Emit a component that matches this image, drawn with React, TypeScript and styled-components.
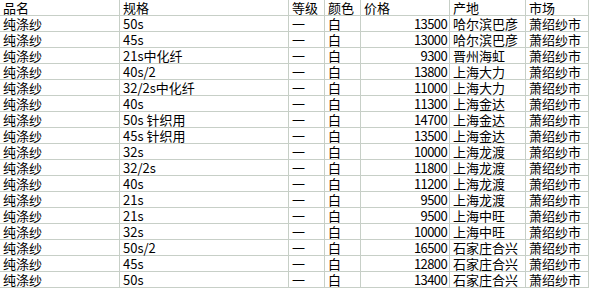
import React from "react";
import styled, { createGlobalStyle } from "styled-components";

const Global = createGlobalStyle`
  html, body { margin: 0; padding: 0; background: #ffffff; }
  body { font-family: "Noto Sans CJK SC", "Liberation Sans", sans-serif; }
`;

const Sheet = styled.div`
  display: grid;
  grid-template-columns: 120px 169px 36px 36px 89px 76px 63px;
  width: 589px;
  font-family: "Noto Sans CJK SC", "Liberation Sans", sans-serif;
  font-size: 13px;
  color: #000;
`;

const Cell = styled.div<{ $align?: "left" | "right" }>`
  height: 15px;
  line-height: 15px;
  border-bottom: 1px solid #c7cfc7;
  border-right: 1px solid #c7cfc7;
  padding: 0 ${(p) => (p.$align === "right" ? "2px" : "0")} 0 ${(p) => (p.$align === "right" ? "0" : "3px")};
  text-align: ${(p) => p.$align ?? "left"};
  letter-spacing: ${(p) => (p.$align === "right" ? "-0.6px" : "0")};
  white-space: pre;
`;

const headers = ["品名", "规格", "等级", "颜色", "价格", "产地", "市场"];

const rows: [string, string, string][] = [
  ["50s", "13500", "哈尔滨巴彦"],
  ["45s", "13000", "哈尔滨巴彦"],
  ["21s中化纤", "9300", "晋州海虹"],
  ["40s/2", "13800", "上海大力"],
  ["32/2s中化纤", "11000", "上海大力"],
  ["40s", "11300", "上海金达"],
  ["50s 针织用", "14700", "上海金达"],
  ["45s 针织用", "13500", "上海金达"],
  ["32s", "10000", "上海龙渡"],
  ["32/2s", "11800", "上海龙渡"],
  ["40s", "11200", "上海龙渡"],
  ["21s", "9500", "上海龙渡"],
  ["21s", "9500", "上海中旺"],
  ["32s", "10000", "上海中旺"],
  ["50s/2", "16500", "石家庄合兴"],
  ["45s", "12800", "石家庄合兴"],
  ["50s", "13400", "石家庄合兴"],
];

export default function App() {
  return (
    <>
      <Global />
      <Sheet>
        {headers.map((h) => (
          <Cell key={h}>{h}</Cell>
        ))}
        {rows.map(([spec, price, origin], i) => (
          <React.Fragment key={i}>
            <Cell>纯涤纱</Cell>
            <Cell>{spec}</Cell>
            <Cell>一</Cell>
            <Cell>白</Cell>
            <Cell $align="right">{price}</Cell>
            <Cell>{origin}</Cell>
            <Cell>萧绍纱市</Cell>
          </React.Fragment>
        ))}
      </Sheet>
    </>
  );
}
